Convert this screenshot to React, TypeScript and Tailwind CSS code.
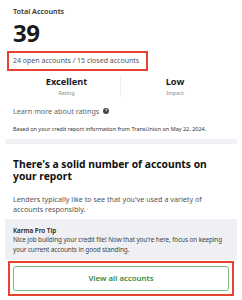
export default function App() {
  return (
    <div className="h-[300px] w-[242px] overflow-hidden bg-white font-['Noto_Sans',sans-serif] text-[#1a1a1a]">
      {/* Summary */}
      <div className="px-[13px] pt-[6px]">
        <p className="text-[7.2px] font-semibold leading-[10px] text-[#333]">Total Accounts</p>
        <p className="mt-[5px] text-[24px] font-bold leading-[24px] tracking-[-0.5px]">39</p>
        <div className="-ml-[6px] mt-[6px] w-[141px] border-2 border-[#e8432e] py-[3px] pl-[4px]">
          <p className="whitespace-nowrap text-[7px] leading-[10px] text-[#555]">
            24 open accounts / 15 closed accounts
          </p>
        </div>

        <div className="mt-[5px] grid grid-cols-2">
          <div className="flex flex-col items-center border-r border-[#eee]">
            <span className="text-[9.2px] font-bold leading-[12px]">Excellent</span>
            <span className="mt-[1px] text-[5.3px] leading-[8px] text-[#888]">Rating</span>
          </div>
          <div className="flex flex-col items-center">
            <span className="text-[9.2px] font-bold leading-[12px]">Low</span>
            <span className="mt-[1px] text-[5.3px] leading-[8px] text-[#888]">Impact</span>
          </div>
        </div>

        <div className="mt-[9px] flex items-center gap-[4px]">
          <span className="text-[7.2px] leading-[10px] text-[#666]">Learn more about ratings</span>
          <span className="flex h-[6px] w-[6px] items-center justify-center rounded-full bg-[#444] text-[4px] font-bold leading-none text-white">
            ?
          </span>
        </div>

        <p className="mt-[9px] whitespace-nowrap text-[5.5px] leading-[8px] text-[#333]">
          Based on your credit report information from TransUnion on May 22, 2024.
        </p>
      </div>

      <div className="mx-[5px] mt-[6px] h-[5px] bg-[#f0f2f5]" />

      {/* Insight */}
      <div className="px-[13px] pt-[14px]">
        <h2 className="text-[10.3px] font-bold leading-[12px] text-[#111]">
          There&apos;s a solid number of accounts on your report
        </h2>
        <p className="mt-[12px] text-[7.2px] leading-[10px] text-[#555]">
          Lenders typically like to see that you&apos;ve used a variety of accounts responsibly.
        </p>
      </div>

      <div className="mx-[5px] mt-[5px] bg-[#eef0f3] px-[8px] pb-[6px] pt-[7px]">
        <p className="text-[6.3px] font-semibold leading-[9px] text-[#222]">Karma Pro Tip</p>
        <p className="text-[6.4px] leading-[9.5px] tracking-[-0.1px] text-[#444]">
          Nice job building your credit file! Now that you&apos;re here, focus on keeping your current accounts in good standing.
        </p>
      </div>

      <div className="mx-[8px] mt-[1px] border-2 border-[#e8432e] p-[3px]">
        <button className="flex h-[25px] w-full items-center justify-center rounded-[3px] border border-[#7dbb7d] bg-white text-[7.8px] font-semibold text-[#3a8a3a]">
          View all accounts
        </button>
      </div>
    </div>
  );
}
